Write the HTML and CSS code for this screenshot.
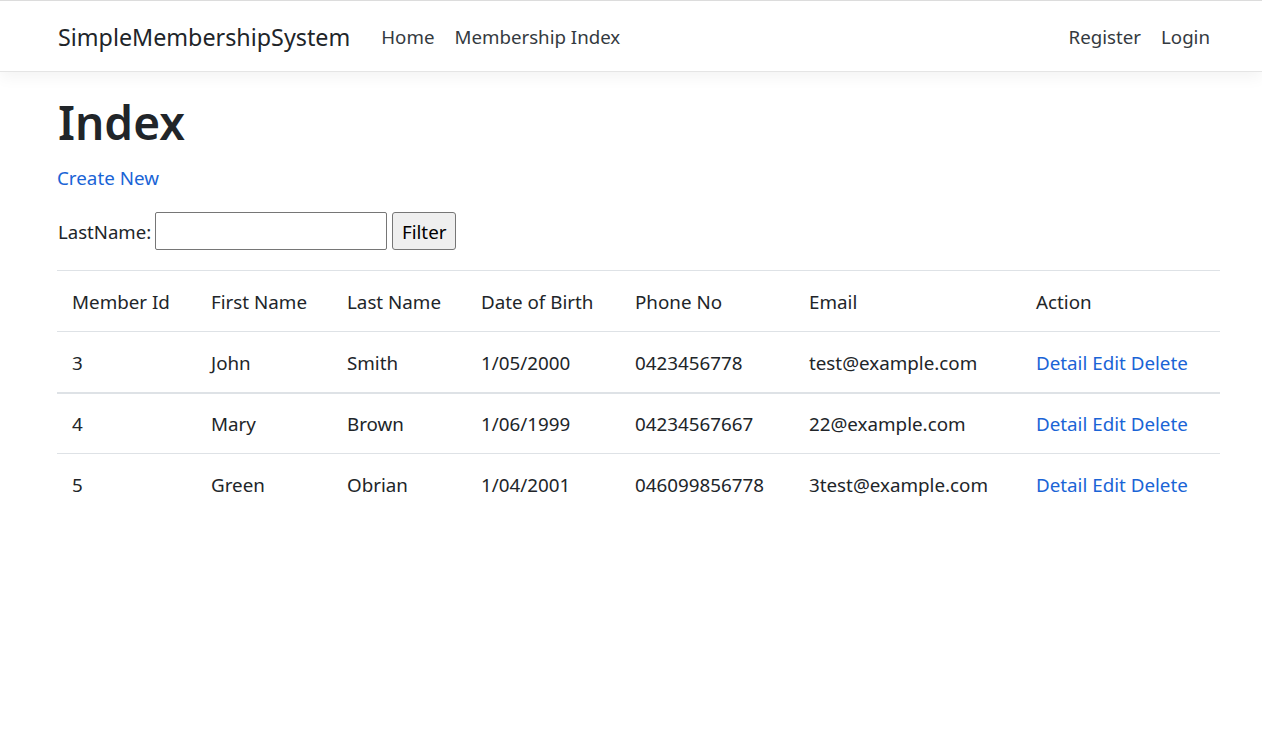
FILE: index.html
```html
<!DOCTYPE html>
<html lang="en">
<head>
<meta charset="utf-8">
<title>Index - SimpleMembershipSystem</title>
<link rel="stylesheet" href="styles.css">
</head>
<body>
<header class="navbar">
  <div class="container nav-inner">
    <a class="brand" href="#">SimpleMembershipSystem</a>
    <nav class="nav-left">
      <a class="nav-link" href="#">Home</a>
      <a class="nav-link" href="#">Membership Index</a>
    </nav>
    <nav class="nav-right">
      <a class="nav-link" href="#">Register</a>
      <a class="nav-link" href="#">Login</a>
    </nav>
  </div>
</header>
<main class="container">
  <h1 class="title">Index</h1>
  <p class="create"><a class="link" href="#">Create New</a></p>
  <form class="filter">
    <label class="filter-label" for="ln">LastName:</label>
    <input class="filter-input" id="ln" type="text">
    <button class="filter-btn" type="button">Filter</button>
  </form>
  <table class="table">
    <colgroup>
      <col class="c1"><col class="c2"><col class="c3"><col class="c4"><col class="c5"><col class="c6"><col class="c7">
    </colgroup>
    <thead>
      <tr><th>Member Id</th><th>First Name</th><th>Last Name</th><th>Date of Birth</th><th>Phone No</th><th>Email</th><th>Action</th></tr>
    </thead>
    <tbody>
      <tr class="first"><td>3</td><td>John</td><td>Smith</td><td>1/05/2000</td><td>0423456778</td><td>test@example.com</td><td><a class="link" href="#">Detail</a> <a class="link" href="#">Edit</a> <a class="link" href="#">Delete</a></td></tr>
      <tr class="thick"><td>4</td><td>Mary</td><td>Brown</td><td>1/06/1999</td><td>04234567667</td><td>22@example.com</td><td><a class="link" href="#">Detail</a> <a class="link" href="#">Edit</a> <a class="link" href="#">Delete</a></td></tr>
      <tr><td>5</td><td>Green</td><td>Obrian</td><td>1/04/2001</td><td>046099856778</td><td>3test@example.com</td><td><a class="link" href="#">Detail</a> <a class="link" href="#">Edit</a> <a class="link" href="#">Delete</a></td></tr>
    </tbody>
  </table>
</main>
</body>
</html>
```
FILE: styles.css
```css
* { box-sizing: border-box; }
html, body { margin: 0; padding: 0; background: #fff; }
body {
  font-family: "Noto Sans", "Open Sans", "Liberation Sans", sans-serif;
  font-size: 18.8px;
  line-height: 30px;
  color: #212529;
}
.container { width: 1163px; margin-left: 57px; }

.navbar {
  height: 72px;
  border-top: 1px solid #dcdcdc;
  border-bottom: 1px solid #e5e5e5;
  box-shadow: 0 5px 15px rgba(0,0,0,0.05);
  margin-bottom: 20px;
  background: #fff;
}
.nav-inner { display: flex; align-items: center; height: 70px; padding-top: 2px; }
.brand {
  font-size: 23.3px;
  color: #212529;
  text-decoration: none;
  margin-right: 21px;
  line-height: 36px;
  padding-left: 1px;
}
.nav-left, .nav-right { display: flex; }
.nav-right { margin-left: auto; }
.nav-link {
  color: #343a40;
  text-decoration: none;
  padding: 0 10px;
  font-size: 18.7px;
}

.title {
  font-size: 46px;
  font-weight: 600;
  line-height: 60px;
  margin: 0 0 10px;
  padding-left: 1px;
}
.create { margin: 0 0 20px; padding-top: 1px; height: 30px; }
.link { color: #1a64d6; text-decoration: none; }

.filter { display: flex; align-items: center; height: 38px; margin-bottom: 20px; }
.filter-label { margin-right: 4px; padding-top: 2px; padding-left: 1px; font-size: 18.6px; }
.filter-input {
  width: 232px; height: 38px;
  border: 1px solid #767676; border-radius: 2px;
  margin: 0 5px 0 0; padding: 0 4px;
  font: inherit;
}
.filter-btn {
  width: 64px; height: 38px;
  border: 1px solid #767676; border-radius: 3px;
  background: #efefef; color: #000;
  font: inherit; padding: 2px 0 0;
}

.table { width: 1163px; border-collapse: collapse; table-layout: fixed; }
.table th, .table td {
  text-align: left; font-weight: 400;
  padding: 16px 15px 14px;
  border-top: 1px solid #dee2e6;
  vertical-align: top;
  white-space: nowrap;
}
.table tr.thick td { border-top: 2px solid #dee2e6; padding-top: 15px; }
.c1 { width: 139px; } .c2 { width: 136px; } .c3 { width: 134px; } .c4 { width: 154px; }
.c5 { width: 174px; } .c6 { width: 227px; } .c7 { width: 199px; }
```
